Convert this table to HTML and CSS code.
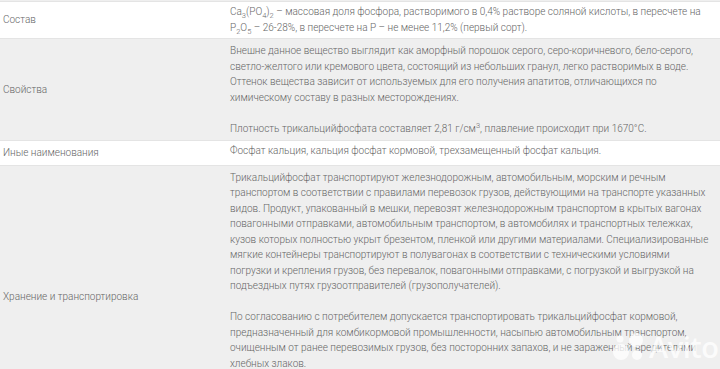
FILE: index.html
```
<!DOCTYPE html>
<html lang="ru">
<head>
<meta charset="utf-8">
<link rel="stylesheet" href="styles.css">
</head>
<body>
<div class="table">
  <div class="row row-gray row-stub"></div>
  <div class="row row-white">
    <div class="label">Состав</div>
    <div class="value">Ca<sub>3</sub>(PO<sub>4</sub>)<sub>2</sub> – массовая доля фосфора, растворимого в 0,4% растворе соляной кислоты, в пересчете на P<sub>2</sub>O<sub>5</sub> – 26-28%, в пересчете на P – не менее 11,2% (первый сорт).</div>
  </div>
  <div class="row row-gray">
    <div class="label">Свойства</div>
    <div class="value">
      <p>Внешне данное вещество выглядит как аморфный порошок серого, серо-коричневого, бело-серого, светло-желтого или кремового цвета, состоящий из небольших гранул, легко растворимых в воде. Оттенок вещества зависит от используемых для его получения апатитов, отличающихся по химическому составу в разных месторождениях.</p>
      <p>Плотность трикальцийфосфата составляет 2,81 г/см<sup>3</sup>, плавление происходит при 1670°C.</p>
    </div>
  </div>
  <div class="row row-white">
    <div class="label">Иные наименования</div>
    <div class="value">Фосфат кальция, кальция фосфат кормовой, трехзамещенный фосфат кальция.</div>
  </div>
  <div class="row row-gray row-last">
    <div class="label">Хранение и транспортировка</div>
    <div class="value">
      <p class="lines">Трикальцийфосфат транспортируют железнодорожным, автомобильным, морским и речным<br>
      транспортом в соответствии с правилами перевозок грузов, действующими на транспорте указанных<br>
      видов. Продукт, упакованный в мешки, перевозят железнодорожным транспортом в крытых вагонах<br>
      повагонными отправками, автомобильным транспортом, в автомобилях и транспортных тележках,<br>
      кузов которых полностью укрыт брезентом, пленкой или другими материалами. Специализированные<br>
      мягкие контейнеры транспортируют в полувагонах в соответствии с техническими условиями<br>
      погрузки и крепления грузов, без перевалок, повагонными отправками, с погрузкой и выгрузкой на<br>
      подъездных путях грузоотправителей (грузополучателей).</p>
      <p>По согласованию с потребителем допускается транспортировать трикальцийфосфат кормовой, предназначенный для комбикормовой промышленности, насыпью автомобильным транспортом, очищенным от ранее перевозимых грузов, без посторонних запахов, и не зараженный вредителями хлебных злаков.</p>
    </div>
  </div>
</div>
<div class="watermark">
  <svg class="wm-dots" width="34" height="30" viewBox="0 0 34 30">
    <circle cx="24" cy="8" r="7"/>
    <circle cx="9" cy="20" r="8"/>
    <circle cx="25" cy="23" r="5"/>
    <circle cx="8" cy="7" r="3.5"/>
  </svg>
  <span class="wm-text">Avito</span>
</div>
</body>
</html>
```
FILE: styles.css
```
html, body {
  margin: 0;
  padding: 0;
}
body {
  font-family: Roboto, "Noto Sans", sans-serif;
  font-weight: 300;
  font-size: 10px;
  line-height: 15.5px;
  color: #666666;
  background: #efefef;
  position: relative;
  overflow: hidden;
}
.table {
  display: flex;
  flex-direction: column;
}
.row {
  display: grid;
  grid-template-columns: 222px 1fr;
  border-bottom: 1px solid #e4e4e4;
}
.row-white { background: #ffffff; }
.row-gray { background: #efefef; }
.row-stub { height: 1px; }
.label {
  display: flex;
  align-items: center;
  padding: 4px 3px;
}
.value {
  min-width: 0;
  padding: 2px 12px 3px 8px;
}
.row-gray .value { padding-top: 4px; padding-bottom: 4px; }
.row-last .value { padding-bottom: 56px; }
.value p { margin: 0; }
.value p + p { margin-top: 15.5px; }
.value .lines { white-space: nowrap; }
sub, sup {
  line-height: 0;
  font-size: 7.5px;
}
.watermark {
  position: absolute;
  left: 612px;
  top: 332px;
  display: flex;
  align-items: center;
  gap: 3px;
  opacity: 0.75;
}
.wm-dots circle {
  fill: #ffffff;
}
.wm-text {
  font-family: "Open Sans", sans-serif;
  font-weight: 600;
  font-size: 29px;
  line-height: 30px;
  color: #ffffff;
  letter-spacing: -0.5px;
}
```
